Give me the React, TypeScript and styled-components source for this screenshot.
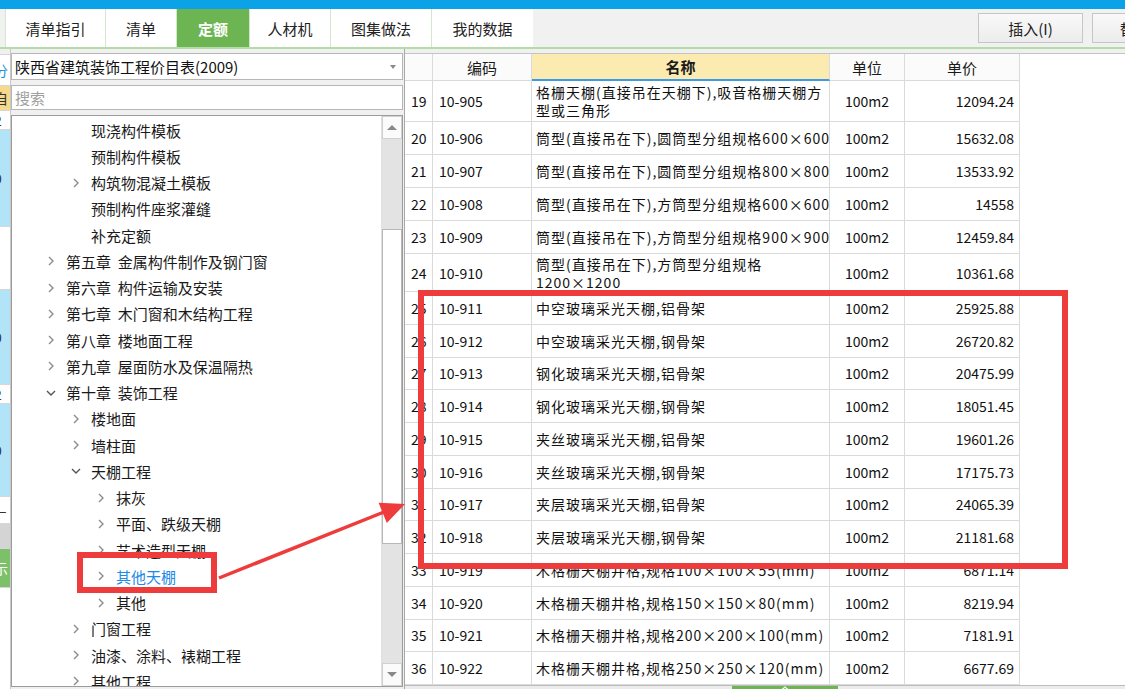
import React from "react";
import styled, { createGlobalStyle } from "styled-components";

const GlobalStyle = createGlobalStyle`
  html, body {
    margin: 0;
    padding: 0;
    background: #ffffff;
  }
  body {
    font-family: "Noto Sans CJK SC", "Noto Sans", sans-serif;
  }
`;

const Screen = styled.div`
  position: relative;
  width: 1125px;
  height: 689px;
  overflow: hidden;
  display: flex;
  flex-direction: column;
  background: #f0f0f0;
`;

const TopBar = styled.div`
  flex: none;
  height: 9px;
  background: #0ca2e8;
`;

const TabBar = styled.div`
  flex: none;
  height: 38px;
  display: flex;
  align-items: stretch;
  padding-left: 5px;
  background: #f1f1f1;
  border-bottom: 2px solid #b4dba8;
  overflow: hidden;
`;

const Tab = styled.div<{ $w: number; $active?: boolean }>`
  flex: none;
  width: ${(p) => p.$w}px;
  box-sizing: border-box;
  display: flex;
  align-items: center;
  justify-content: center;
  font-size: 15px;
  font-weight: ${(p) => (p.$active ? 700 : 400)};
  color: ${(p) => (p.$active ? "#ffffff" : "#222222")};
  background: ${(p) => (p.$active ? "#6cb552" : "#ffffff")};
  border-left: 1px solid #d4e7cd;
  &:last-of-type {
    border-right: 1px solid #d4e7cd;
  }
`;

const ToolArea = styled.div`
  flex: none;
  display: flex;
  align-items: center;
  gap: 9px;
  margin-left: 445px;
`;

const ToolButton = styled.div`
  flex: none;
  width: 105px;
  height: 30px;
  box-sizing: border-box;
  display: flex;
  align-items: center;
  justify-content: center;
  font-size: 15px;
  color: #222;
  background: linear-gradient(#f9f9f9, #ececec);
  border: 1px solid #c6c6c6;
`;

const Body = styled.div`
  flex: 1;
  display: flex;
  min-height: 0;
`;

const SideStrip = styled.div`
  flex: none;
  width: 10px;
  display: flex;
  flex-direction: column;
  overflow: hidden;
  border-right: 1px solid #c8c8c8;
`;

const StripCell = styled.div<{ $h: number; $bg: string; $fg?: string }>`
  flex: none;
  height: ${(p) => p.$h}px;
  background: ${(p) => p.$bg};
  color: ${(p) => p.$fg || "#333"};
  border-bottom: 1px solid #d6d6d6;
  font-size: 14px;
  line-height: ${(p) => p.$h}px;
  text-indent: -6px;
  overflow: hidden;
  white-space: nowrap;
`;

const LeftPanel = styled.div`
  flex: none;
  width: 392px;
  display: flex;
  flex-direction: column;
  gap: 5px;
  padding: 4px 0 2px;
  box-sizing: border-box;
`;

const Select = styled.div`
  flex: none;
  height: 27px;
  box-sizing: border-box;
  display: flex;
  align-items: center;
  justify-content: space-between;
  padding: 0 6px 0 3px;
  background: #fff;
  border: 1px solid #b6b6b6;
  font-size: 15px;
  color: #111;
`;

const Caret = styled.span`
  width: 0;
  height: 0;
  border-left: 3px solid transparent;
  border-right: 3px solid transparent;
  border-top: 4px solid #8a8a8a;
`;

const Search = styled.div`
  flex: none;
  height: 25px;
  box-sizing: border-box;
  display: flex;
  align-items: center;
  padding-left: 3px;
  background: #fff;
  border: 1px solid #b6b6b6;
  font-size: 15px;
  color: #a0a0a0;
`;

const TreeBox = styled.div`
  flex: 1;
  min-height: 0;
  display: flex;
  background: #fff;
  border: 1px solid #9c9c9c;
`;

const TreeList = styled.div`
  flex: 1;
  overflow: hidden;
  padding-top: 1px;
`;

const TreeRow = styled.div<{ $level: number; $selected?: boolean }>`
  height: 26.25px;
  display: flex;
  align-items: center;
  padding-left: ${(p) => 32 + (p.$level - 1) * 25}px;
  font-size: 15px;
  color: ${(p) => (p.$selected ? "#1d8ae6" : "#1a1a1a")};
  white-space: pre;
`;

const Chevron = styled.span`
  flex: none;
  width: 14px;
  height: 14px;
  margin-right: 8px;
  display: flex;
  align-items: center;
  justify-content: center;
`;

const ScrollBar = styled.div`
  flex: none;
  width: 20px;
  display: flex;
  flex-direction: column;
  background: #e3e3e3;
  border-left: 1px solid #e0e0e0;
`;

const ScrollButton = styled.div`
  flex: none;
  height: 21px;
  display: flex;
  align-items: center;
  justify-content: center;
  background: #fbfbfb;
  border: 1px solid #d0d0d0;
`;

const ScrollGap = styled.div<{ $h?: number }>`
  flex: ${(p) => (p.$h ? "none" : "1")};
  height: ${(p) => (p.$h ? `${p.$h}px` : "auto")};
`;

const ScrollThumb = styled.div`
  flex: none;
  height: 315px;
  background: #ffffff;
  border: 1px solid #b8b8b8;
  box-sizing: border-box;
`;

const Arrow = styled.span<{ $up?: boolean }>`
  width: 0;
  height: 0;
  border-left: 5px solid transparent;
  border-right: 5px solid transparent;
  ${(p) => (p.$up ? "border-bottom: 5px solid #8a8a8a;" : "border-top: 5px solid #8a8a8a;")}
`;

const RightPanel = styled.div`
  flex: 1;
  margin-left: 1px;
  display: flex;
  flex-direction: column;
  padding-top: 4px;
  background: #f0f0f0;
  border-left: 1px solid #a8a8a8;
`;

const TableArea = styled.div`
  flex: 1;
  display: flex;
  flex-direction: column;
  background: #fff;
  border-top: 1px solid #c4c4c4;
  overflow: hidden;
`;

const GridRow = styled.div<{ $h: number }>`
  flex: none;
  height: ${(p) => p.$h}px;
  display: grid;
  grid-template-columns: 28px 99px 298px 75px 115px;
`;

const HeadCell = styled.div<{ $name?: boolean }>`
  display: flex;
  align-items: center;
  justify-content: center;
  font-size: 15px;
  font-weight: ${(p) => (p.$name ? 700 : 400)};
  color: #1a1a1a;
  background: ${(p) => (p.$name ? "#fcebb0" : "#fbfbfb")};
  border-right: 1px solid #dadada;
  border-bottom: ${(p) => (p.$name ? "2px solid #3d9be6" : "1px solid #dadada")};
`;

const Cell = styled.div<{ $align?: "left" | "center" | "right"; $pad?: number }>`
  display: flex;
  flex-direction: column;
  justify-content: center;
  align-items: ${(p) =>
    p.$align === "center" ? "center" : p.$align === "right" ? "flex-end" : "flex-start"};
  padding: 0 ${(p) => (p.$align === "right" ? 5 : 0)}px 0 ${(p) => p.$pad ?? 4}px;
  font-size: 14px;
  line-height: 18px;
  color: #111;
  border-right: 1px solid #dadada;
  border-bottom: 1px solid #dadada;
  overflow: hidden;
  white-space: nowrap;
`;

const NameText = styled.span`
  display: block;
  line-height: 18px;
  letter-spacing: 1px;
`;

const TableFoot = styled.div`
  flex: 1;
  display: flex;
  justify-content: center;
  background: #ececec;
  border-top: 1px solid #bdbdbd;
  padding-left: 40px;
`;

const Handle = styled.div`
  width: 106px;
  background: #6cb552;
  display: flex;
  align-items: center;
  justify-content: center;
`;

const RedBox = styled.div<{ $x: number; $y: number; $w: number; $h: number }>`
  position: absolute;
  left: ${(p) => p.$x}px;
  top: ${(p) => p.$y}px;
  width: ${(p) => p.$w}px;
  height: ${(p) => p.$h}px;
  box-sizing: border-box;
  border: 6px solid #ee3b3b;
  pointer-events: none;
`;

const Overlay = styled.svg`
  position: absolute;
  left: 0;
  top: 0;
  pointer-events: none;
`;

type TreeItem = { level: number; text: string; icon?: "right" | "down"; selected?: boolean };

const tree: TreeItem[] = [
  { level: 2, text: "现浇构件模板" },
  { level: 2, text: "预制构件模板" },
  { level: 2, text: "构筑物混凝土模板", icon: "right" },
  { level: 2, text: "预制构件座浆灌缝" },
  { level: 2, text: "补充定额" },
  { level: 1, text: "第五章  金属构件制作及钢门窗", icon: "right" },
  { level: 1, text: "第六章  构件运输及安装", icon: "right" },
  { level: 1, text: "第七章  木门窗和木结构工程", icon: "right" },
  { level: 1, text: "第八章  楼地面工程", icon: "right" },
  { level: 1, text: "第九章  屋面防水及保温隔热", icon: "right" },
  { level: 1, text: "第十章  装饰工程", icon: "down" },
  { level: 2, text: "楼地面", icon: "right" },
  { level: 2, text: "墙柱面", icon: "right" },
  { level: 2, text: "天棚工程", icon: "down" },
  { level: 3, text: "抹灰", icon: "right" },
  { level: 3, text: "平面、跌级天棚", icon: "right" },
  { level: 3, text: "艺术造型天棚", icon: "right" },
  { level: 3, text: "其他天棚", icon: "right", selected: true },
  { level: 3, text: "其他", icon: "right" },
  { level: 2, text: "门窗工程", icon: "right" },
  { level: 2, text: "油漆、涂料、裱糊工程", icon: "right" },
  { level: 2, text: "其他工程", icon: "right" },
];

type Quota = { no: number; code: string; name: string[]; unit: string; price: string; h: number };

const quotas: Quota[] = [
  { no: 19, code: "10-905", name: ["格栅天棚(直接吊在天棚下),吸音格栅天棚方", "型或三角形"], unit: "100m2", price: "12094.24", h: 41 },
  { no: 20, code: "10-906", name: ["筒型(直接吊在下),圆筒型分组规格600×600"], unit: "100m2", price: "15632.08", h: 33 },
  { no: 21, code: "10-907", name: ["筒型(直接吊在下),圆筒型分组规格800×800"], unit: "100m2", price: "13533.92", h: 33 },
  { no: 22, code: "10-908", name: ["筒型(直接吊在下),方筒型分组规格600×600"], unit: "100m2", price: "14558", h: 33 },
  { no: 23, code: "10-909", name: ["筒型(直接吊在下),方筒型分组规格900×900"], unit: "100m2", price: "12459.84", h: 33 },
  { no: 24, code: "10-910", name: ["筒型(直接吊在下),方筒型分组规格", "1200×1200"], unit: "100m2", price: "10361.68", h: 38 },
  { no: 25, code: "10-911", name: ["中空玻璃采光天棚,铝骨架"], unit: "100m2", price: "25925.88", h: 32.75 },
  { no: 26, code: "10-912", name: ["中空玻璃采光天棚,钢骨架"], unit: "100m2", price: "26720.82", h: 32.75 },
  { no: 27, code: "10-913", name: ["钢化玻璃采光天棚,铝骨架"], unit: "100m2", price: "20475.99", h: 32.75 },
  { no: 28, code: "10-914", name: ["钢化玻璃采光天棚,钢骨架"], unit: "100m2", price: "18051.45", h: 32.75 },
  { no: 29, code: "10-915", name: ["夹丝玻璃采光天棚,铝骨架"], unit: "100m2", price: "19601.26", h: 32.75 },
  { no: 30, code: "10-916", name: ["夹丝玻璃采光天棚,钢骨架"], unit: "100m2", price: "17175.73", h: 32.75 },
  { no: 31, code: "10-917", name: ["夹层玻璃采光天棚,铝骨架"], unit: "100m2", price: "24065.39", h: 32.75 },
  { no: 32, code: "10-918", name: ["夹层玻璃采光天棚,钢骨架"], unit: "100m2", price: "21181.68", h: 32.75 },
  { no: 33, code: "10-919", name: ["木格栅天棚井格,规格100×100×55(mm)"], unit: "100m2", price: "6871.14", h: 32.75 },
  { no: 34, code: "10-920", name: ["木格栅天棚井格,规格150×150×80(mm)"], unit: "100m2", price: "8219.94", h: 32.75 },
  { no: 35, code: "10-921", name: ["木格栅天棚井格,规格200×200×100(mm)"], unit: "100m2", price: "7181.91", h: 32.75 },
  { no: 36, code: "10-922", name: ["木格栅天棚井格,规格250×250×120(mm)"], unit: "100m2", price: "6677.69", h: 32.75 },
];

const stripCells: { h: number; bg: string; fg?: string; t?: string }[] = [
  { h: 5, bg: "#f0f0f0" },
  { h: 30, bg: "#ffffff", fg: "#1a8fd8", t: "分" },
  { h: 24, bg: "#f6d98a", t: "自" },
  { h: 18, bg: "#ffffff", t: "2" },
  { h: 96, bg: "#b3e3f6", t: "0" },
  { h: 62, bg: "#ffffff" },
  { h: 94, bg: "#b3e3f6", t: "0" },
  { h: 18, bg: "#ffffff", t: "2" },
  { h: 92, bg: "#b3e3f6", t: "0" },
  { h: 26, bg: "#ffffff", t: "—" },
  { h: 24, bg: "#d4d4d4" },
  { h: 38, bg: "#7cc06a", fg: "#fff", t: "示" },
  { h: 120, bg: "#ffffff" },
];

function ChevronIcon({ dir }: { dir: "right" | "down" }) {
  return (
    <svg width="10" height="10" viewBox="0 0 10 10">
      <path
        d={dir === "right" ? "M3 1 L7 5 L3 9" : "M1 3 L5 7 L9 3"}
        fill="none"
        stroke={dir === "right" ? "#8c8c8c" : "#555"}
        strokeWidth="1.4"
      />
    </svg>
  );
}

export default function App() {
  const tabs = [
    { label: "清单指引", w: 100 },
    { label: "清单", w: 71 },
    { label: "定额", w: 73, active: true },
    { label: "人材机", w: 81 },
    { label: "图集做法", w: 101 },
    { label: "我的数据", w: 102 },
  ];

  return (
    <Screen>
      <GlobalStyle />
      <TopBar />
      <TabBar>
        {tabs.map((t) => (
          <Tab key={t.label} $w={t.w} $active={t.active}>
            {t.label}
          </Tab>
        ))}
        <ToolArea>
          <ToolButton>插入(I)</ToolButton>
          <ToolButton>替换(R)</ToolButton>
        </ToolArea>
      </TabBar>
      <Body>
        <SideStrip>
          {stripCells.map((c, i) => (
            <StripCell key={i} $h={c.h} $bg={c.bg} $fg={c.fg}>
              {c.t}
            </StripCell>
          ))}
        </SideStrip>
        <LeftPanel>
          <Select>
            <span>陕西省建筑装饰工程价目表(2009)</span>
            <Caret />
          </Select>
          <Search>搜索</Search>
          <TreeBox>
            <TreeList>
              {tree.map((item) => (
                <TreeRow key={item.text} $level={item.level} $selected={item.selected}>
                  <Chevron>{item.icon && <ChevronIcon dir={item.icon} />}</Chevron>
                  {item.text}
                </TreeRow>
              ))}
            </TreeList>
            <ScrollBar>
              <ScrollButton>
                <Arrow $up />
              </ScrollButton>
              <ScrollGap $h={90} />
              <ScrollThumb />
              <ScrollGap />
              <ScrollButton>
                <Arrow />
              </ScrollButton>
            </ScrollBar>
          </TreeBox>
        </LeftPanel>
        <RightPanel>
          <TableArea>
            <GridRow $h={27}>
              <HeadCell />
              <HeadCell>编码</HeadCell>
              <HeadCell $name>名称</HeadCell>
              <HeadCell>单位</HeadCell>
              <HeadCell>单价</HeadCell>
            </GridRow>
            {quotas.map((q) => (
              <GridRow key={q.no} $h={q.h}>
                <Cell $pad={6}>{q.no}</Cell>
                <Cell $pad={6}>{q.code}</Cell>
                <Cell $pad={4}>
                  {q.name.map((line) => (
                    <NameText key={line}>{line}</NameText>
                  ))}
                </Cell>
                <Cell $align="center" $pad={0}>
                  {q.unit}
                </Cell>
                <Cell $align="right">{q.price}</Cell>
              </GridRow>
            ))}
            <TableFoot>
              <Handle>
                <svg width="10" height="5" viewBox="0 0 10 5">
                  <path d="M1 4.5 L5 1 L9 4.5" fill="none" stroke="#ffffff" strokeWidth="1.2" />
                </svg>
              </Handle>
            </TableFoot>
          </TableArea>
        </RightPanel>
      </Body>

      <RedBox $x={418} $y={290} $w={650} $h={279} />
      <RedBox $x={77} $y={552} $w={140} $h={41} />
      <Overlay width="1125" height="689" viewBox="0 0 1125 689">
        <line x1="219" y1="578" x2="384" y2="512" stroke="#ee3b3b" strokeWidth="3.5" />
        <polygon points="405,504 378.6,502.7 386.8,523.1" fill="#ee3b3b" />
      </Overlay>
    </Screen>
  );
}
